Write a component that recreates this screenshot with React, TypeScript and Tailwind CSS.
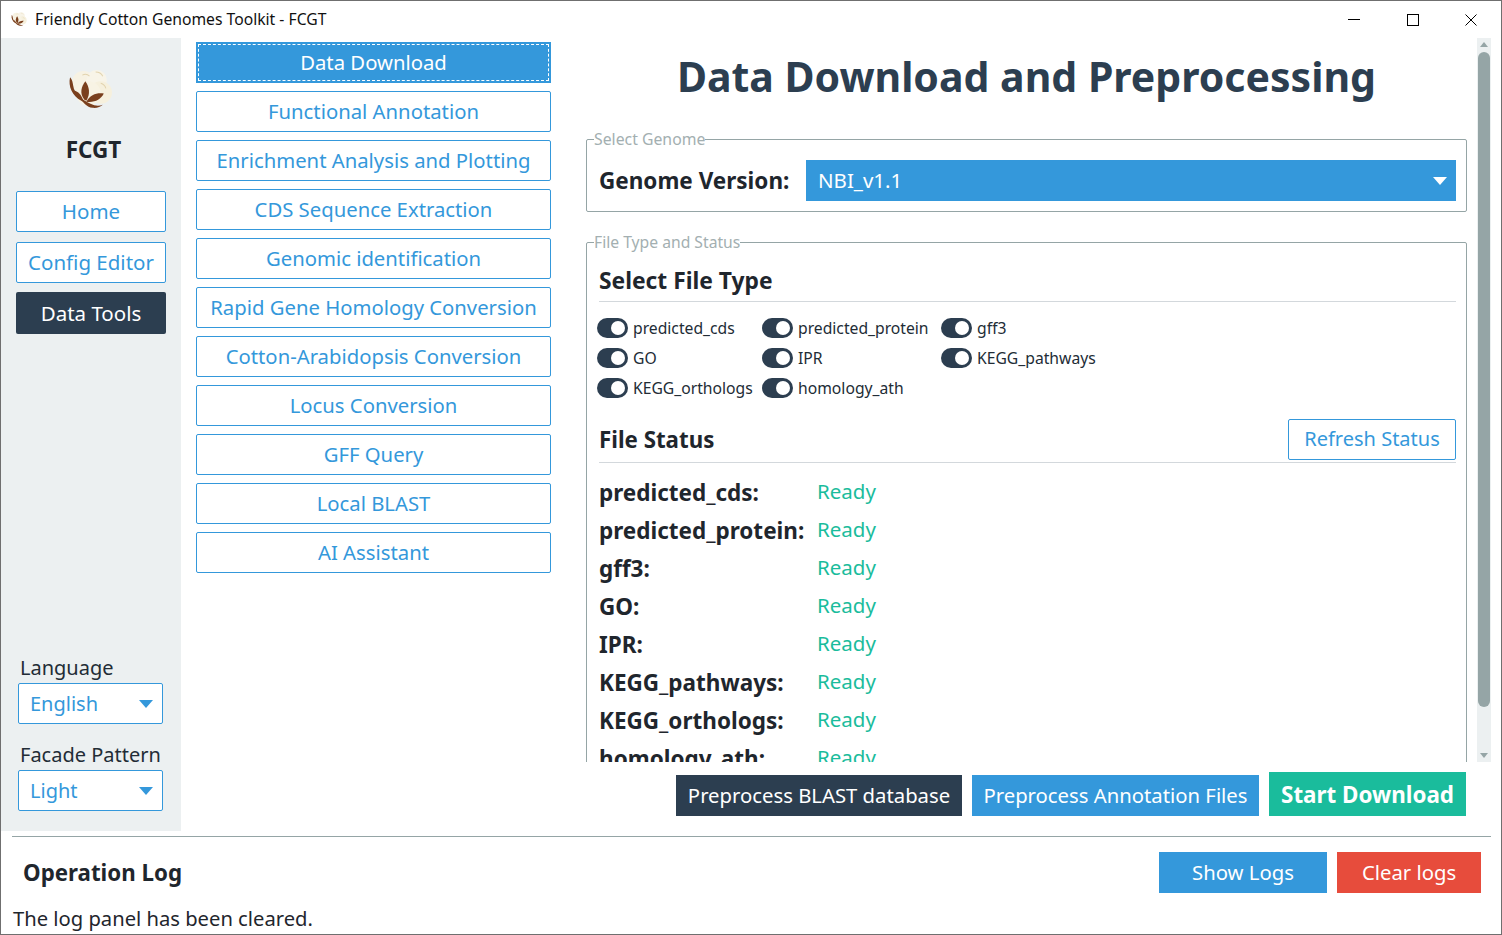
import React from "react";

const font = { fontFamily: '"Noto Sans", "Open Sans", sans-serif' };

function Cotton({ size }: { size: number }) {
  return (
    <svg width={size} height={size} viewBox="0 0 44 44">
      <circle cx="15" cy="13" r="11" fill="#f7f2e3" />
      <circle cx="28" cy="11" r="10" fill="#f8f4e8" />
      <circle cx="32" cy="23" r="11" fill="#f6f0dd" />
      <circle cx="20" cy="24" r="12" fill="#f8f3e4" />
      <path d="M14 6q4-2 7 1M27 3q5 0 7 4M32 14q4 1 5 5" stroke="#e2d3ae" strokeWidth="1" fill="none" />
      <path d="M16 30C11 24 13 17 17 12C21 18 22 24 18 31Z" fill="#7a3f1d" />
      <path d="M18 32C22 25 28 23 35 24C32 30 26 33 18 32Z" fill="#7a3f1d" />
      <path d="M15 31C10 29 7 27 6 21C10 22 13 25 15 31Z" fill="#7a3f1d" />
      <path d="M2 8C0 17 4 26 13 31C16 33 18 37 24 38C28 38.500 32 37 34 35C30 36.500 26 36 22 34C16 31 6 26 5 16C4.700 13 4 10 2 8Z" fill="#7a3f1d" />
    </svg>
  );
}

function Caret({ color }: { color: string }) {
  return (
    <svg width="14" height="8" viewBox="0 0 14 8">
      <path d="M0 0H14L7 8Z" fill={color} />
    </svg>
  );
}

function Toggle({ label }: { label: string }) {
  return (
    <div className="flex items-center gap-[5px]">
      <span className="flex h-[20px] w-[31px] items-center justify-end rounded-full bg-[#2c3e50] pr-[3px]">
        <span className="h-[14px] w-[14px] rounded-full bg-white" />
      </span>
      <span className="text-[15.700px] leading-[20px] text-[#222c36]">{label}</span>
    </div>
  );
}

const navItems = [
  "Functional Annotation",
  "Enrichment Analysis and Plotting",
  "CDS Sequence Extraction",
  "Genomic identification",
  "Rapid Gene Homology Conversion",
  "Cotton-Arabidopsis Conversion",
  "Locus Conversion",
  "GFF Query",
  "Local BLAST",
  "AI Assistant",
];

const outline = "flex items-center justify-center rounded-[2px] border border-[#3498db] bg-white text-[#3498db]";

const types = ["predicted_cds", "predicted_protein", "gff3", "GO", "IPR", "KEGG_pathways", "KEGG_orthologs", "homology_ath"];
const statuses = ["predicted_cds:", "predicted_protein:", "gff3:", "GO:", "IPR:", "KEGG_pathways:", "KEGG_orthologs:", "homology_ath:"];

export default function App() {
  return (
    <div style={font} className="flex h-[935px] w-[1502px] flex-col overflow-hidden border border-[#6f6f6f] bg-white">
      <div className="flex h-[37px] shrink-0 items-center">
        <span className="ml-[10px] flex w-[24px]"><Cotton size={16} /></span>
        <span className="text-[15.700px] text-[#111]">Friendly Cotton Genomes Toolkit - FCGT</span>
        <div className="ml-auto flex items-center gap-[46.500px] pr-[24px] text-black">
          <svg width="12" height="12" viewBox="0 0 12 12"><path d="M0 5.500H12" stroke="#000" /></svg>
          <svg width="12" height="12" viewBox="0 0 12 12"><rect x="0.500" y="0.500" width="11" height="11" fill="none" stroke="#000" /></svg>
          <svg width="12" height="12" viewBox="0 0 12 12"><path d="M0.500 0.500L11.500 11.500M11.500 0.500L0.500 11.500" stroke="#000" /></svg>
        </div>
      </div>

      <div className="flex h-[793px] shrink-0">
        <aside className="flex w-[180px] shrink-0 flex-col bg-[#ecf0f1]">
          <div className="ml-[67px] mt-[31px]"><Cotton size={45} /></div>
          <div className="mt-[20px] pl-[5px] text-center text-[22.500px] font-bold leading-[32px] text-[#1f262d]">FCGT</div>
          <div className="ml-[15px] mt-[25px] flex w-[150px] flex-col gap-[10px] text-[20.500px]">
            <div className={`${outline} h-[41px]`}>Home</div>
            <div className={`${outline} h-[41px]`}>Config Editor</div>
            <div className="-mt-px flex h-[42px] items-center justify-center rounded-[2px] bg-[#2c3e50] text-white">Data Tools</div>
          </div>
          <div className="ml-[19px] mt-[318px] h-[31px] text-[20px] leading-[32px] text-[#222c36]">Language</div>
          <div className="ml-[17px] flex h-[41px] w-[145px] items-center justify-between rounded-[2px] border border-[#3498db] bg-white pl-[11px] pr-[9px] text-[20px] text-[#3498db]">
            English<Caret color="#3498db" />
          </div>
          <div className="ml-[19px] mt-[15px] h-[31px] text-[20px] leading-[32px] text-[#222c36]">Facade Pattern</div>
          <div className="ml-[17px] flex h-[41px] w-[145px] items-center justify-between rounded-[2px] border border-[#3498db] bg-white pl-[11px] pr-[9px] text-[20px] text-[#3498db]">
            Light<Caret color="#3498db" />
          </div>
        </aside>

        <nav className="ml-[15px] flex w-[355px] shrink-0 flex-col gap-[8px] pt-[4px] text-[20.300px]">
          <div className="flex h-[41px] items-center justify-center bg-[#3498db] text-white outline-1 -outline-offset-3 outline-dashed outline-white">
            Data Download
          </div>
          {navItems.map((n) => (
            <div key={n} className={`${outline} h-[41px]`}>{n}</div>
          ))}
        </nav>

        <main className="ml-[35px] flex w-[905px] shrink-0 flex-col">
          <div className="flex h-[724px] shrink-0">
            <div className="h-full w-[881px] overflow-hidden">
              <h1 className="flex h-[91px] items-center justify-center pb-[13px] text-[41px] font-bold text-[#2c3e50]">
                Data Download and Preprocessing
              </h1>
              <fieldset className="h-[83px] rounded-[2px] border border-[#95a5a6] pl-[12px] pr-[10px]">
                <legend className="ml-[-5px] text-[15.800px] leading-[20px] text-[#a3afb1]">Select Genome</legend>
                <div className="mt-[11px] flex items-center">
                  <span className="w-[207px] text-[22.500px] font-bold text-[#1f262d]">Genome Version:</span>
                  <div className="flex h-[41px] flex-1 items-center justify-between bg-[#3498db] pl-[12px] pr-[9px] text-[20.500px] text-white">
                    NBI_v1.1<Caret color="#fff" />
                  </div>
                </div>
              </fieldset>
              <fieldset className="mt-[20px] h-[560px] rounded-[2px] border border-[#95a5a6] pl-[12px] pr-[10px]">
                <legend className="ml-[-5px] text-[15.700px] leading-[20px] text-[#a3afb1]">File Type and Status</legend>
                <div className="flex h-[50px] items-center border-b border-[#d3d8dc] pt-[9px] text-[22.800px] font-bold text-[#1f262d]">
                  Select File Type
                </div>
                <div className="ml-[-2px] mt-[11px] grid grid-cols-[165px_179px_auto] auto-rows-[30px] items-center">
                  {types.map((t) => (
                    <Toggle key={t} label={t} />
                  ))}
                </div>
                <div className="mt-[15px] flex h-[45px] items-center justify-between border-b border-[#d3d8dc] pb-[2px]">
                  <span className="pt-[2px] text-[22.300px] font-bold text-[#1f262d]">File Status</span>
                  <div className={`${outline} h-[41px] w-[168px] text-[20px]`}>Refresh Status</div>
                </div>
                <div className="mt-[10px] grid grid-cols-[219px_auto] auto-rows-[38px] items-center">
                  {statuses.map((s) => (
                    <React.Fragment key={s}>
                      <span className="pt-[2px] text-[22.500px] font-bold text-[#1f262d]">{s}</span>
                      <span className="-ml-px pb-[2px] text-[20.500px] text-[#1abc9c]">Ready</span>
                    </React.Fragment>
                  ))}
                </div>
              </fieldset>
            </div>
            <div className="ml-[10px] flex w-[14px] flex-col items-center bg-[#ecf0f1]">
              <svg className="mt-[4px]" width="8" height="5" viewBox="0 0 8 5"><path d="M4 0L8 5H0Z" fill="#95a5a6" /></svg>
              <div className="mt-[5px] h-[655px] w-[12px] rounded-full bg-[#95a5a6]" />
              <svg className="mt-[46px]" width="8" height="5" viewBox="0 0 8 5"><path d="M0 0H8L4 5Z" fill="#95a5a6" /></svg>
            </div>
          </div>
          <div className="flex w-[880px] items-end justify-end gap-[10px] pt-[10px] text-[20.300px] text-white">
            <div className="flex h-[41px] w-[286px] items-center justify-center bg-[#2c3e50]">Preprocess BLAST database</div>
            <div className="flex h-[41px] w-[287px] items-center justify-center bg-[#3498db]">Preprocess Annotation Files</div>
            <div className="flex h-[44px] w-[197px] items-center justify-center bg-[#1abc9c] pt-[2px] text-[22.400px] font-bold">Start Download</div>
          </div>
        </main>
      </div>

      <div className="ml-[11px] mr-[10px] mt-[5px] h-px bg-[#95a5a6]" />
      <div className="flex h-[56px] items-center justify-between pl-[22px] pr-[20px] pt-[15px]">
        <span className="text-[22.300px] font-bold text-[#1f262d]">Operation Log</span>
        <div className="flex gap-[10px] text-[20.300px] text-white">
          <div className="flex h-[41px] w-[168px] items-center justify-center bg-[#3498db]">Show Logs</div>
          <div className="flex h-[41px] w-[144px] items-center justify-center bg-[#e74c3c]">Clear logs</div>
        </div>
      </div>
      <div className="pl-[12px] pt-[10px] text-[20.200px] leading-[30px] text-[#1f262d]">The log panel has been cleared.</div>
    </div>
  );
}
